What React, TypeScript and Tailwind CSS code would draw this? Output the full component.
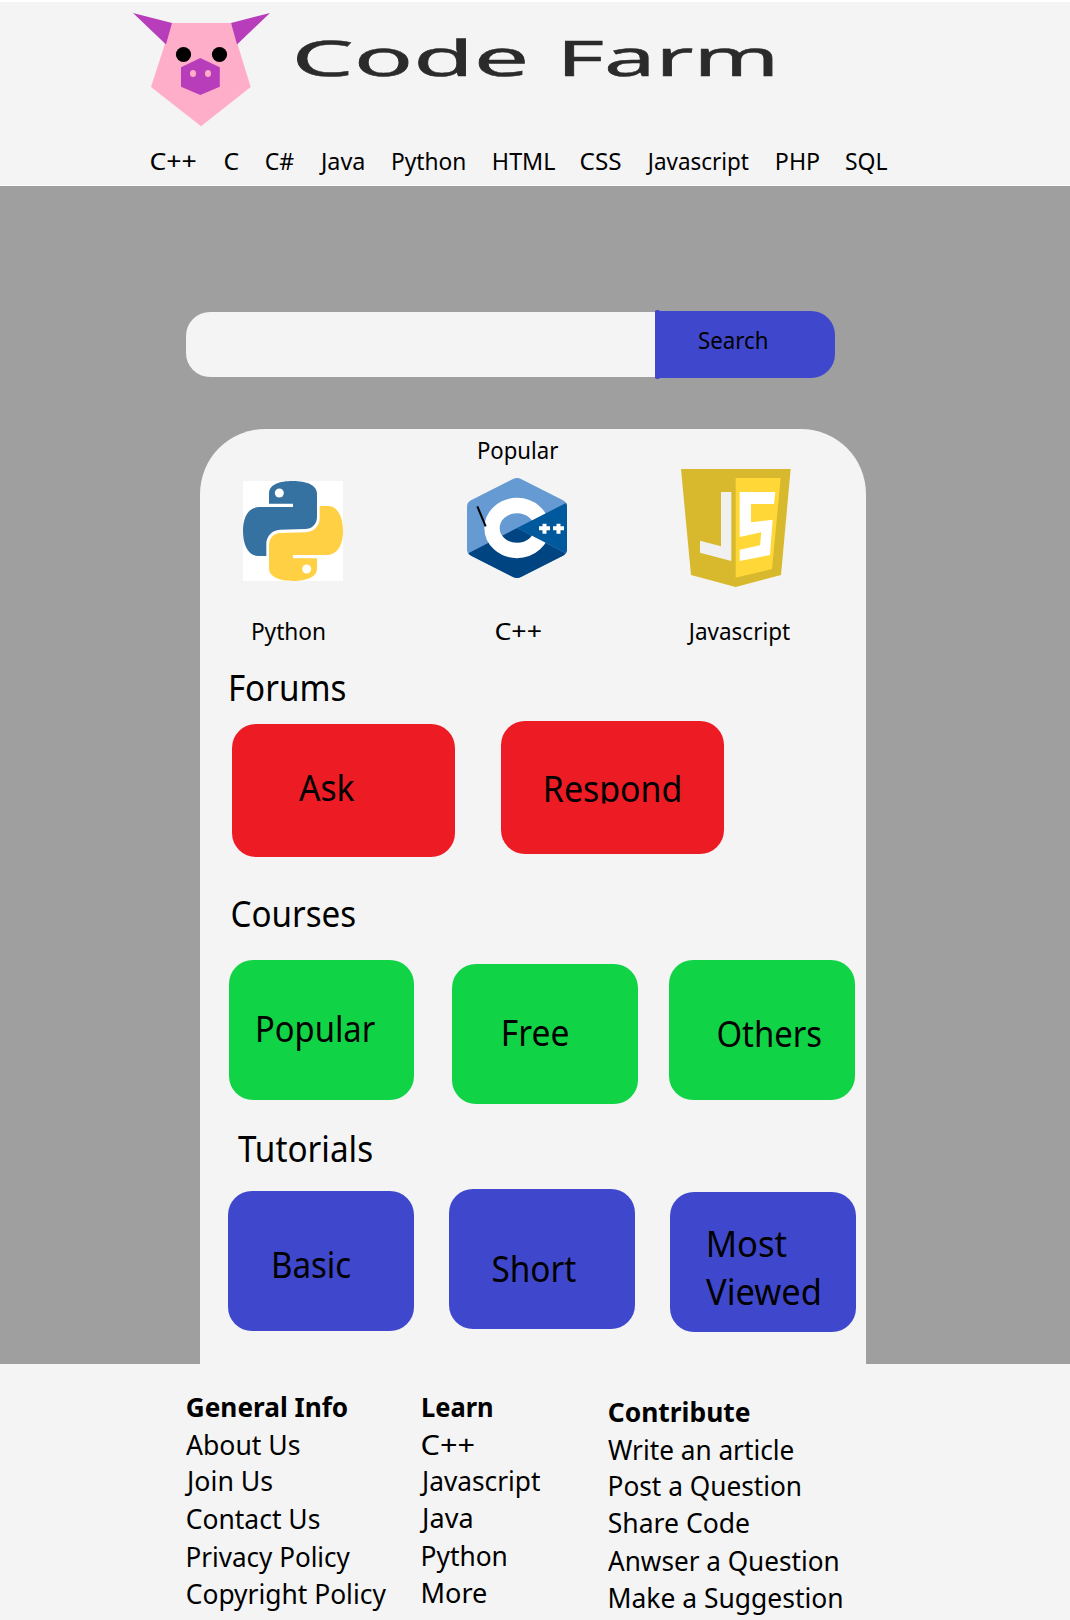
import { useLayoutEffect, useRef, useState } from "react";

type FitProps = { text: string; w: number; className?: string };

/** One line of text whose visible ink starts at the box's left edge and is `w` pixels wide. */
function Fit({ text, w, className = "" }: FitProps) {
  const ref = useRef<HTMLSpanElement>(null);
  const [fit, setFit] = useState({ indent: 0, scale: 1 });

  useLayoutEffect(() => {
    const ctx = document.createElement("canvas").getContext("2d");
    if (!ref.current || !ctx) return;
    const cs = getComputedStyle(ref.current);
    // Measured at ten times the size, so that rounded glyph bounds do not matter.
    ctx.font = `${cs.fontWeight} ${parseFloat(cs.fontSize) * 10}px ${cs.fontFamily}`;
    const m = ctx.measureText(text);
    const ink = (m.actualBoundingBoxLeft + m.actualBoundingBoxRight) / 10;
    setFit({ indent: m.actualBoundingBoxLeft / 10, scale: w / ink });
  }, [text, w]);

  return (
    <span
      ref={ref}
      className={`block origin-left whitespace-nowrap ${className}`}
      style={{ width: w, textIndent: fit.indent, transform: `scaleX(${fit.scale})` }}
    >
      {text}
    </span>
  );
}

const small = "text-[23.5px] leading-8";
const large = "text-[35.5px] leading-[48px] translate-y-[0.5px]";
const titleText = "text-[49.500px] leading-[68px] [-webkit-text-stroke:0.5px_#2b2b2b]";

function PigLogo() {
  return (
    <svg className="h-[115px] w-[138px]" viewBox="133 12 138 115">
      <path d="M171.7 23H231l19.7 64L201 126.3 151 87Z" fill="#ffaec9" />
      <path d="M133 13l39 10-6 21.5ZM270 13l-39 10 6 21.5Z" fill="#b83dba" />
      <path d="M200.3 58l19.5 9.3v19.4L200.3 95 181 86.700V67.300Z" fill="#b83dba" />
      <circle cx="183.500" cy="54.500" r="7.600" />
      <circle cx="219.500" cy="54.500" r="7.600" />
      <ellipse cx="193" cy="73.500" rx="3" ry="3.600" fill="#ffaec9" />
      <ellipse cx="208" cy="73.500" rx="3" ry="3.600" fill="#ffaec9" />
    </svg>
  );
}

const snake =
  "M78 38C78 10 110 0 149 0C190 0 222 12 222 38V108C222 130 206 144 186 144L111 146C88 147 70 165 70 188V225H45C15 225 0 190 0 150C0 110 15 78 50 78H150V68H78Z";

function PythonLogo() {
  return (
    <svg className="size-[100px] bg-white" viewBox="0 0 300 300">
      <path d={snake} fill="#3571a1" />
      <path d={snake} fill="#ffd043" transform="rotate(180 150 150)" />
      <circle cx="109" cy="36" r="13.500" fill="#fff" />
      <circle cx="191" cy="264" r="13.500" fill="#fff" />
    </svg>
  );
}

function CppLogo() {
  return (
    <svg className="size-[100px]" viewBox="0 0 300 300">
      <path
        d="M138 3Q150 -3 162 3L288 67Q300 73 300 86V214Q300 226 290 232L162 297Q150 303 138 297L10 232Q0 226 0 214V86Q0 73 12 67Z"
        fill="#659ad2"
      />
      <path d="M4 226L150 150L296 226Q294 230 288 233L162 297Q150 303 138 297L12 233Q6 230 4 226Z" fill="#004482" />
      <ellipse cx="150" cy="150" rx="75" ry="67.500" fill="none" stroke="#fff" strokeWidth="46" />
      <path d="M150 150L297 75Q300 80 300 86V214Q300 221 297 226Z" fill="#00599c" />
      <path d="M216 151H249M232.500 137V167M258 151H291M274.500 137V167" stroke="#fff" strokeWidth="12" />
      <path d="M31 85L56 145" stroke="#000" strokeWidth="6" />
    </svg>
  );
}

function JsLogo() {
  return (
    <svg className="h-[118px] w-[110px]" viewBox="0 0 330 354">
      <path d="M0 0H329L300 318L164 354L30 318Z" fill="#d8b82d" />
      <path d="M164 27H299L273 300L164 326Z" fill="#ffd838" />
      <path d="M120 69H151V276L57 251V215L120 232Z" fill="#f0f0f0" />
      <path d="M176 69H283L279 105H210V160L275 152L267 258L176 276V242L237 229L241 190L176 204Z" fill="#fff" />
    </svg>
  );
}

const nav: [string, number, string][] = [
  ["C++", 44.5, ""],
  ["C", 13.5, ""],
  ["C#", 27.5, ""],
  ["Java", 44.5, "-ml-px"],
  ["Python", 71.5, ""],
  ["HTML", 61, ""],
  ["CSS", 39.5, ""],
  ["Javascript", 102.5, "-ml-px"],
  ["PHP", 42, ""],
  ["SQL", 41, ""],
];

type Line = [text: string, w: number, className: string];

const footer: { className: string; title: Line; lines: Line[] }[] = [
  {
    className: "w-[235.5px] pt-[25px]",
    title: ["General Info", 160, "h-[38px]"],
    lines: [
      ["About Us", 113.4, "h-9 -ml-px"],
      ["Join Us", 87, "h-[38px] -ml-0.5"],
      ["Contact Us", 132.2, "h-[38px]"],
      ["Privacy Policy", 162, "h-[37px] ml-px"],
      ["Copyright Policy", 199, "h-9"],
    ],
  },
  {
    className: "w-[187px] pt-[25px]",
    title: ["Learn", 69.2, "h-[38px] ml-px"],
    lines: [
      ["C++", 51.8, "h-9"],
      ["Javascript", 120, "h-[37px] -ml-[2.5px]"],
      ["Java", 51.5, "h-[38px] -ml-[2.5px]"],
      ["Python", 83, "h-[37px] ml-px"],
      ["More", 63, "h-9 ml-px"],
    ],
  },
  {
    className: "pt-[30px]",
    title: ["Contribute", 140.6, "h-[38px]"],
    lines: [
      ["Write an article", 185, "h-9 -ml-px"],
      ["Post a Question", 190.2, "h-[37px] ml-px"],
      ["Share Code", 139.7, "h-[38px]"],
      ["Anwser a Question", 229.8, "h-[37px] -ml-px"],
      ["Make a Suggestion", 231.7, "h-9 ml-px"],
    ],
  },
];

export default function App() {
  return (
    <div className="flex h-[1620px] w-[1070px] flex-col overflow-hidden bg-[#f4f4f4] font-['Noto_Sans',sans-serif] text-black">
      <header className="h-[186px] border-t-2 border-b border-white">
        <div className="flex pt-[10px] pl-[133px]">
          <PigLogo />
          <h1 className="mt-[10.500px] ml-[24.500px] flex gap-[41px] text-[#2b2b2b]">
            <Fit text="Code" w={228.5} className={titleText} />
            <Fit text="Farm" w={207.5} className={titleText} />
          </h1>
        </div>
        <nav className="mt-[17.500px] grid grid-cols-[74.500px_41px_54px_73px_100.500px_87.500px_66px_130px_69px_60px] pl-[150.500px]">
          {nav.map(([text, w, cls]) => (
            <a key={text}>
              <Fit text={text} w={w} className={`${small} ${cls}`} />
            </a>
          ))}
        </nav>
      </header>

      <main className="h-[1178px] bg-[#9f9f9f] pt-[125px]">
        <div className="ml-[186px] flex items-center">
          <div className="h-[65px] w-[469px] rounded-l-[24px] bg-[#f4f4f4]" />
          <button className="relative flex h-[67px] w-[180px] rounded-r-[24px] bg-[#3f48cc] pt-[13px] pl-[44px] before:absolute before:-top-px before:left-0 before:h-[69px] before:w-[5px] before:rounded-[2px] before:bg-[#3f48cc]">
            <Fit text="Search" w={67.7} className={small} />
          </button>
        </div>

        <section className="mt-[51px] ml-[200px] h-[935px] w-[666px] rounded-t-[65px] bg-[#f4f4f4] pt-[5px]">
          <h2 className="pl-[278.700px]">
            <Fit text="Popular" w={79} className={small} />
          </h2>
          <div className="flex h-[181px]">
            <div className="flex w-[224px] flex-col justify-between pt-[15px] pl-[43px]">
              <PythonLogo />
              <Fit text="Python" w={71.3} className={`ml-[9.700px] ${small}`} />
            </div>
            <div className="flex w-[214px] flex-col justify-between pt-3 pl-[43px]">
              <CppLogo />
              <Fit text="C++" w={44.7} className={`ml-[29.300px] ${small}`} />
            </div>
            <div className="flex flex-col justify-between pt-[3px] pl-[43px]">
              <JsLogo />
              <Fit text="Javascript" w={102.7} className={`ml-[6px] ${small}`} />
            </div>
          </div>

          <h2 className="mt-[15px] pl-[30.700px]">
            <Fit text="Forums" w={114} className={large} />
          </h2>
          <div className="mt-[11px] flex gap-[46px] pl-8">
            <a className="mt-[3px] h-[133px] w-[223px] rounded-3xl bg-[#ed1c24] pt-[38px] pl-[67px]">
              <Fit text="Ask" w={55.5} className={large} />
            </a>
            <a className="h-[133px] w-[223px] rounded-3xl bg-[#ed1c24] pt-[42px] pl-[44.800px]">
              <Fit text="Respond" w={133.5} className={`h-10 overflow-y-clip ${large}`} />
            </a>
          </div>

          <h2 className="mt-[31px] pl-8">
            <Fit text="Courses" w={122.7} className={large} />
          </h2>
          <div className="mt-6 flex h-36 pl-[29px]">
            <a className="h-[140px] w-[185px] rounded-3xl bg-[#10d345] pt-[43px] pl-[28.700px]">
              <Fit text="Popular" w={117} className={large} />
            </a>
            <a className="mt-1 ml-[38px] h-[140px] w-[186px] rounded-3xl bg-[#10d345] pt-[43px] pl-[52px]">
              <Fit text="Free" w={63.7} className={large} />
            </a>
            <a className="ml-[31px] h-[140px] w-[186px] rounded-3xl bg-[#10d345] pt-12 pl-[49.300px]">
              <Fit text="Others" w={102.7} className={large} />
            </a>
          </div>

          <h2 className="mt-[19px] pl-[37.500px]">
            <Fit text="Tutorials" w={133.7} className={large} />
          </h2>
          <div className="mt-[18px] flex pl-7">
            <a className="mt-0.5 h-[140px] w-[186px] rounded-3xl bg-[#3f48cc] pt-12 pl-[45.700px]">
              <Fit text="Basic" w={76.3} className={large} />
            </a>
            <a className="ml-[35px] h-[140px] w-[186px] rounded-3xl bg-[#3f48cc] pt-[54px] pl-[43.700px]">
              <Fit text="Short" w={82.7} className={large} />
            </a>
            <a className="mt-[3px] ml-[35px] h-[140px] w-[186px] rounded-3xl bg-[#3f48cc] pt-[26px] pl-[36px]">
              <Fit text="Most" w={77.5} className={`ml-[2.800px] ${large}`} />
              <Fit text="Viewed" w={113} className={large} />
            </a>
          </div>
        </section>
      </main>

      <footer className="flex h-64 pl-[186.500px]">
        {footer.map(({ className, title, lines }) => (
          <div key={title[0]} className={className}>
            <h3 className="font-bold">
              <Fit text={title[0]} w={title[1]} className={`text-[27px] leading-9 ${title[2]}`} />
            </h3>
            {lines.map(([text, w, cls]) => (
              <Fit key={text} text={text} w={w} className={`text-[27px] leading-9 ${cls}`} />
            ))}
          </div>
        ))}
      </footer>
    </div>
  );
}
